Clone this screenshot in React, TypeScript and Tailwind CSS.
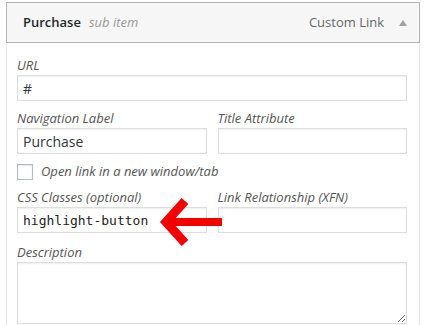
import React from "react";

const label = "block text-[13px] leading-[20px] italic text-[#555]";
const inputBase =
  "block w-full h-[26px] border border-[#dddddd] bg-white px-[5px] shadow-[inset_0_1px_2px_rgba(0,0,0,0.07)] outline-none";
const input = inputBase + " text-[14px] text-[#32373c]";

export default function App() {
  return (
    <div
      className="relative w-[439px] h-[325px] bg-white overflow-hidden"
      style={{ fontFamily: '"Open Sans", "Liberation Sans", sans-serif' }}
    >
      <div className="ml-[6px] mt-[2px] w-[414px]">
        <div className="flex items-center h-[41px] border border-[#b4b4b4] bg-[#f6f6f6] pl-[16px] pr-[11px]">
          <span className="text-[13px] font-semibold text-[#23282d]">Purchase</span>
          <span className="ml-[8px] text-[13px] italic text-[#999]">sub item</span>
          <span className="ml-auto text-[13px] text-[#666]">Custom Link</span>
          <svg width="10" height="8" viewBox="0 0 10 8" className="ml-[14px]">
            <polygon points="5,1 9,7 1,7" fill="#a0a0a0" />
          </svg>
        </div>
        <div className="border-x border-[#e5e5e5] pl-[10px] pr-[12px] pt-[12px] pb-[10px]">
          <label className={label}>URL</label>
          <input className={inputBase + " h-[25px] text-[14px] text-[#32373c]"} defaultValue="#" readOnly />
          <div className="mt-[7px] grid grid-cols-2 gap-x-[11px]">
            <div>
              <label className={label}>Navigation Label</label>
              <input className={input} defaultValue="Purchase" readOnly />
            </div>
            <div>
              <label className={label}>Title Attribute</label>
              <input className={input} defaultValue="" readOnly />
            </div>
          </div>
          <div className="mt-[10px] flex items-center h-[16px]">
            <span className="block w-[16px] h-[16px] border border-[#b4b9be] bg-white shadow-[inset_0_1px_2px_rgba(0,0,0,0.1)]" />
            <span className="ml-[8px] text-[13px] italic text-[#555]">Open link in a new window/tab</span>
          </div>
          <div className="mt-[7px] grid grid-cols-2 gap-x-[11px]">
            <div>
              <label className={label}>CSS Classes (optional)</label>
              <input
                className={inputBase + " text-[13px] text-[#222]"}
                style={{ fontFamily: '"DejaVu Sans Mono", "Liberation Mono", monospace' }}
                defaultValue="highlight-button"
                readOnly
              />
            </div>
            <div>
              <label className={label}>Link Relationship (XFN)</label>
              <input className={input} defaultValue="" readOnly />
            </div>
          </div>
          <div className="mt-[9px]">
            <label className={label}>Description</label>
            <textarea
              className="block w-full h-[62px] border border-[#dddddd] bg-white shadow-[inset_0_1px_2px_rgba(0,0,0,0.07)] outline-none resize"
              readOnly
            />
          </div>
        </div>
      </div>
      <svg
        className="absolute left-0 top-0 pointer-events-none"
        width="439"
        height="325"
        viewBox="0 0 439 325"
      >
        <polyline
          points="185,201 166,222 185,243"
          fill="none"
          stroke="#f50000"
          strokeWidth="9"
          strokeLinejoin="miter"
          strokeMiterlimit="10"
        />
        <line x1="170" y1="222" x2="222" y2="222" stroke="#f50000" strokeWidth="8" />
      </svg>
    </div>
  );
}
